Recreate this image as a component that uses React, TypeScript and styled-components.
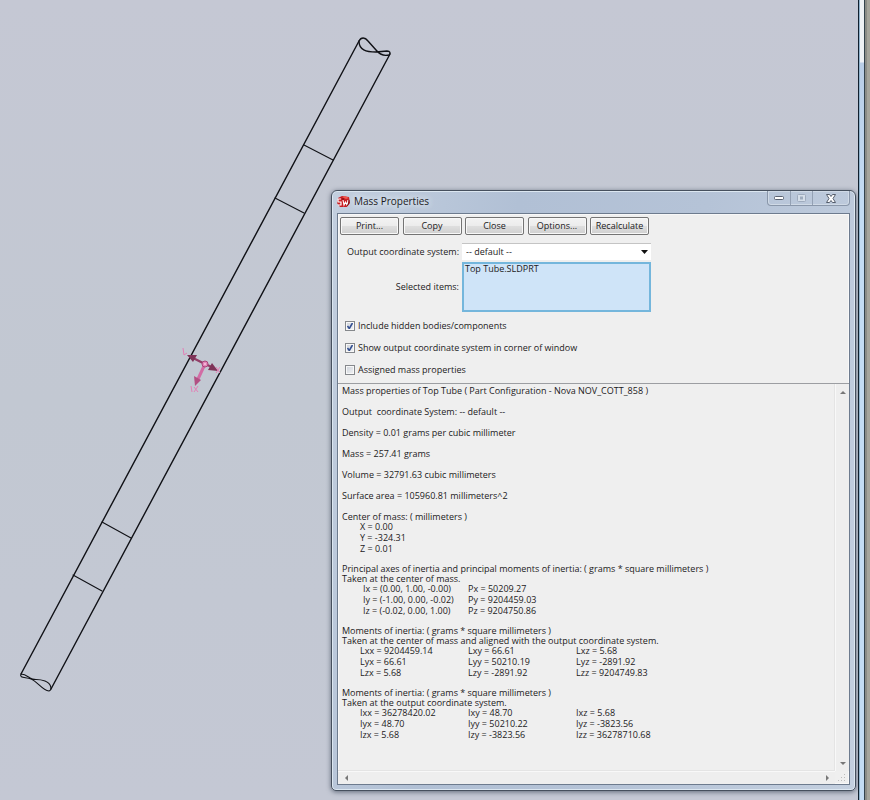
import React from 'react';
import styled, { createGlobalStyle } from 'styled-components';

const GlobalStyle = createGlobalStyle`
  * { box-sizing: border-box; }
  body { margin: 0; }
  body, button, select, textarea {
    font-family: "Open Sans", "Noto Sans", sans-serif;
    font-size: 9px;
    line-height: 10px;
    color: #1c1a22;
  }
`;

const Page = styled.div`
  display: flex;
  min-height: 100vh;
  background: #c4c8d3;
`;

const Viewport = styled.main`
  position: relative;
  flex: 1;
  overflow: hidden;
  background: linear-gradient(#c5c8d4, #c2c8d2 50%, #c4c8d4);
`;

const Drawing = styled.svg`
  position: absolute;
  left: 0;
  top: 0;
`;

const WindowEdge = styled.div`
  width: 12px;
  border-left: 1px solid #10202e;
  background:
    linear-gradient(90deg, #8fb2cc 0 1px, transparent 1px 5px, #34434d 5px 6px, #8b8c87 6px 8px, #a5a59d 8px),
    linear-gradient(#eef1f5 0 62px, #b9cde6 63px, #c3dcf4 200px);
`;

const Dialog = styled.section`
  position: absolute;
  top: 190px;
  right: 2px;
  bottom: 9px;
  width: 525px;
  display: flex;
  flex-direction: column;
  padding: 0 5px 5px;
  border: 1px solid #46505e;
  border-radius: 6px 6px 5px 5px;
  background: linear-gradient(100deg, #c3cfdf, #b1c0d5 30%, #b5c3d7 60%, #c3cfdf);
  box-shadow: inset 0 0 0 1px #dce7f1, 0 1px 5px #5f6878;
`;

const TitleBar = styled.header`
  display: flex;
  align-items: flex-start;
  height: 22px;
`;

const Title = styled.h1`
  flex: 1;
  display: flex;
  align-items: center;
  gap: 4px;
  height: 20px;
  margin: 0;
  font-size: 10px;
  font-weight: 400;
  line-height: 12px;
  text-shadow: 0 0 6px #e8f0f8, 0 0 6px #e8f0f8;
`;

const Caption = styled.div`
  display: flex;
  height: 15px;
  border: 1px solid #8a97aa;
  border-top: 0;
  border-radius: 0 0 4px 4px;
  box-shadow: inset 0 0 0 1px #d0dae6;
`;

const CaptionButton = styled.button<{ $wide?: boolean }>`
  display: grid;
  place-items: center;
  width: ${(p) => (p.$wide ? 37 : 22)}px;
  padding: 0;
  border: 0;
  background: none;
  & + & { border-left: 1px solid #94a1b4; }
`;

const Body = styled.div`
  flex: 1;
  display: flex;
  flex-direction: column;
  border: 1px solid #6d7b8e;
  background: #efefef;
  box-shadow: inset 0 0 0 1px #f8f8f8;
`;

const Toolbar = styled.div`
  display: flex;
  justify-content: space-between;
  width: 309px;
  margin: 3px 0 0 2px;
`;

const PushButton = styled.button`
  width: 59px;
  height: 18px;
  padding: 0;
  border: 1px solid #747474;
  border-radius: 2px;
  background: linear-gradient(#f3f3f3, #ececec 48%, #dedede 52%, #d0d0d0);
  box-shadow: inset 0 0 0 1px #f8f8f8;
  white-space: nowrap;
`;

const Form = styled.div`
  display: grid;
  grid-template-columns: 121px 189px;
  align-items: center;
  column-gap: 3px;
  row-gap: 2px;
  margin-top: 8px;
`;

const FieldLabel = styled.label`
  text-align: right;
  white-space: nowrap;
`;

const SelectBox = styled.div`
  display: flex;
  align-items: center;
  background: #fff;
  border-top: 1px solid #c4c4c4;
  svg { margin: 0 3px 0 -12px; pointer-events: none; }
`;

const Select = styled.select`
  appearance: none;
  flex: 1;
  height: 16px;
  padding: 0 4px;
  border: 0;
  background: transparent;
`;

const Items = styled.textarea`
  display: block;
  width: 100%;
  height: 50px;
  padding: 0 1px;
  border: 2px solid #74b6dc;
  outline: 0;
  resize: none;
  background: #cfe4f8;
`;

const Checks = styled.div`
  display: grid;
  gap: 11px;
  padding: 8px 7px;
`;

const CheckLabel = styled.label`
  display: flex;
  align-items: center;
  gap: 3px;
  height: 11px;
`;

const CheckBox = styled.input`
  appearance: none;
  width: 10px;
  height: 10px;
  margin: 0;
  border: 1px solid #85888c;
  box-shadow: inset 0 0 0 1px #f8f8f8;
  background: linear-gradient(135deg, #cdd2d9, #f2f3f5);
  &:checked {
    background: url("data:image/svg+xml,%3Csvg xmlns='http://www.w3.org/2000/svg' viewBox='0 0 8 8'%3E%3Cpath d='M1.5 4 3.3 6.5 6.5 1' fill='none' stroke='%23334f91' stroke-width='1.5'/%3E%3C/svg%3E"), linear-gradient(135deg, #cdd2d9, #f2f3f5);
  }
`;

const Output = styled.div`
  flex: 1;
  display: grid;
  grid-template-columns: 1fr 14px;
  grid-template-rows: 1fr 13px;
  border-top: 1px solid #9c9ea2;
`;

const Report = styled.article`
  padding: 2px 4px;
  white-space: pre;
`;

const Line = styled.p`
  margin: 0 0 11px;
`;

const Group = styled.section`
  margin-bottom: 9px;
`;

const GroupText = styled.p`
  margin: 0;
`;

const Values = styled.table<{ $indent: number }>`
  margin-left: ${(p) => p.$indent}px;
  border-collapse: collapse;
  table-layout: fixed;
  td { width: 108px; padding: 0 0 1px; }
  td:first-child { width: ${(p) => 126 - p.$indent}px; }
`;

const Bar = styled.div<{ $vertical?: boolean }>`
  display: flex;
  flex-direction: ${(p) => (p.$vertical ? 'column' : 'row')};
  justify-content: space-between;
  align-items: center;
  padding: ${(p) => (p.$vertical ? '4px 0' : '0 4px')};
  background: #eeeeee;
  border: 0 solid #f8f8f8;
  border-width: ${(p) => (p.$vertical ? '0 0 0 1px' : '1px 0 0')};
  box-shadow: ${(p) => (p.$vertical ? '-1px 0 #e4e4e4' : '0 -1px #e4e4e4')};
`;

const Arrow = styled.button`
  display: grid;
  place-items: center;
  width: 8px;
  height: 8px;
  padding: 0;
  border: 0;
  background: none;
`;

const Grip = styled.svg`
  place-self: center;
`;

const arrows = {
  up: 'M1 6 4 3 7 6Z',
  down: 'M1 3 4 6 7 3Z',
  left: 'M6 1 3 4 6 7Z',
  right: 'M3 1 6 4 3 7Z',
};

function ScrollArrow({ to }: { to: keyof typeof arrows }) {
  return (
    <Arrow type="button" aria-label={`Scroll ${to}`}>
      <svg width="8" height="8"><path d={arrows[to]} fill="#777" /></svg>
    </Arrow>
  );
}

function Tube() {
  return (
    <Drawing width="858" height="800" viewBox="0 0 858 800" fill="none" aria-label="Top tube">
      <g stroke="#101116" strokeWidth="1.4" strokeLinecap="round">
        <path d="M359 41 21 674M390 54 51 689" />
        <path d="M359 41C361 37 365 37 368 41L376 50C380 55 385 56 389 55 391 53 390 51 387 51L376 52C366 52 359 50 359 41" />
        <path d="M21 674C19 678 25 677 31 679 38 682 42 690 49 691 52 690 52 684 45 681 37 678 34 681 30 678 27 676 25 674 21 674" strokeWidth="1.1" />
        <path d="M304 145 333 160M275 198 304 213M102 522 131 538M73 575 102 591" strokeWidth="1.1" />
      </g>
      <g stroke="#b04f82" strokeWidth="2.4" strokeLinecap="round">
        <path d="M205 364 193 358M205 364 214 368" stroke="#923f68" />
        <path d="M205 364 198 379" stroke="#d26ca5" strokeWidth="3" />
      </g>
      <path d="M187 355 197 355 193 362ZM218 371 208 370 212 363Z" fill="#7e3358" />
      <path d="M195 386 194 376 201 380Z" fill="#b25083" />
      <circle cx="205" cy="364" r="3" fill="#e486b9" stroke="#a94579" />
      <circle cx="205" cy="364" r="1" fill="#f7c5df" />
      <path d="M183 348 184 355 187 353M216 367 220 373M220 367 216 373M191 386 192 392M194 387 198 392M198 386 194 392" stroke="#e47fb6" />
    </Drawing>
  );
}

function AppIcon() {
  return (
    <svg width="13" height="13" viewBox="0 0 13 13" fill="none">
      <path d="M1 3 5 1 12 2 13 8 10 12 3 12 0 8Z" fill="#c91d22" />
      <path d="M5 2 8 1 12 3 9 4Z" fill="#ef5a50" />
      <path d="M4 4H1V7H4V10H1" stroke="#fff" strokeWidth="1.2" />
      <path d="M6 5 7 10 8.500 7 10 10 11 5" stroke="#fff" strokeWidth="1.1" />
      <path d="M6 3V5M12 5V8L10 11" stroke="#6f0d12" />
    </svg>
  );
}

const summary = [
  'Mass properties of Top Tube ( Part Configuration - Nova NOV_COTT_858 )',
  'Output  coordinate System: -- default --',
  'Density = 0.01 grams per cubic millimeter',
  'Mass = 257.41 grams',
  'Volume = 32791.63 cubic millimeters',
  'Surface area = 105960.81 millimeters^2',
];

const groups = [
  {
    text: ['Center of mass: ( millimeters )'],
    indent: 18,
    rows: [['X = 0.00'], ['Y = -324.31'], ['Z = 0.01']],
  },
  {
    text: [
      'Principal axes of inertia and principal moments of inertia: ( grams * square millimeters )',
      'Taken at the center of mass.',
    ],
    indent: 21,
    rows: [
      ['Ix = (0.00, 1.00, -0.00)', 'Px = 50209.27'],
      ['Iy = (-1.00, 0.00, -0.02)', 'Py = 9204459.03'],
      ['Iz = (-0.02, 0.00, 1.00)', 'Pz = 9204750.86'],
    ],
  },
  {
    text: [
      'Moments of inertia: ( grams * square millimeters )',
      'Taken at the center of mass and aligned with the output coordinate system.',
    ],
    indent: 18,
    rows: [
      ['Lxx = 9204459.14', 'Lxy = 66.61', 'Lxz = 5.68'],
      ['Lyx = 66.61', 'Lyy = 50210.19', 'Lyz = -2891.92'],
      ['Lzx = 5.68', 'Lzy = -2891.92', 'Lzz = 9204749.83'],
    ],
  },
  {
    text: ['Moments of inertia: ( grams * square millimeters )', 'Taken at the output coordinate system.'],
    indent: 18,
    rows: [
      ['Ixx = 36278420.02', 'Ixy = 48.70', 'Ixz = 5.68'],
      ['Iyx = 48.70', 'Iyy = 50210.22', 'Iyz = -3823.56'],
      ['Izx = 5.68', 'Izy = -3823.56', 'Izz = 36278710.68'],
    ],
  },
];

const options = [
  { label: 'Include hidden bodies/components', checked: true },
  { label: 'Show output coordinate system in corner of window', checked: true },
  { label: 'Assigned mass properties', checked: false },
];

export default function App() {
  return (
    <Page>
      <GlobalStyle />
      <Viewport>
        <Tube />
        <Dialog role="dialog" aria-labelledby="dialog-title">
          <TitleBar>
            <Title id="dialog-title"><AppIcon />Mass Properties</Title>
            <Caption>
              <CaptionButton type="button" aria-label="Minimize">
                <svg width="10" height="5"><rect x=".5" y=".5" width="9" height="3" rx="1" fill="#fff" stroke="#596170" /></svg>
              </CaptionButton>
              <CaptionButton type="button" aria-label="Maximize" disabled>
                <svg width="9" height="8" fill="none" stroke="#9eabbd"><rect x=".5" y=".5" width="8" height="7" rx="1" fill="#d5dee9" /><rect x="3.500" y="3" width="2" height="2" /></svg>
              </CaptionButton>
              <CaptionButton type="button" aria-label="Close window" $wide>
                <svg width="10" height="9" viewBox="0 0 10 9"><path d="M.5.5H3.500L5 2.500 6.500.5H9.500L7 4.500 9.500 8.500H6.500L5 6.500 3.500 8.500H.5L3 4.500Z" fill="#fff" stroke="#555d6b" /></svg>
              </CaptionButton>
            </Caption>
          </TitleBar>
          <Body>
            <Toolbar>
              {['Print...', 'Copy', 'Close', 'Options...', 'Recalculate'].map((name) => (
                <PushButton type="button" key={name}>{name}</PushButton>
              ))}
            </Toolbar>
            <Form>
              <FieldLabel htmlFor="system">Output coordinate system:</FieldLabel>
              <SelectBox>
                <Select id="system"><option>-- default --</option></Select>
                <svg width="7" height="4"><path d="M0 0H7L3.500 4Z" fill="#111" /></svg>
              </SelectBox>
              <FieldLabel htmlFor="items">Selected items:</FieldLabel>
              <Items id="items" readOnly value="Top Tube.SLDPRT" />
            </Form>
            <Checks>
              {options.map((o) => (
                <CheckLabel key={o.label}>
                  <CheckBox type="checkbox" defaultChecked={o.checked} />
                  {o.label}
                </CheckLabel>
              ))}
            </Checks>
            <Output>
              <Report>
                {summary.map((line) => <Line key={line}>{line}</Line>)}
                {groups.map((group, i) => (
                  <Group key={i}>
                    {group.text.map((t) => <GroupText key={t}>{t}</GroupText>)}
                    <Values $indent={group.indent}>
                      <tbody>
                        {group.rows.map((row) => (
                          <tr key={row[0]}>{row.map((cell) => <td key={cell}>{cell}</td>)}</tr>
                        ))}
                      </tbody>
                    </Values>
                  </Group>
                ))}
              </Report>
              <Bar $vertical><ScrollArrow to="up" /><ScrollArrow to="down" /></Bar>
              <Bar><ScrollArrow to="left" /><ScrollArrow to="right" /></Bar>
              <Grip width="8" height="8" fill="#bcbcbc">
                <path d="M6 0h1v1H6zM3 3h1v1H3zM6 3h1v1H6zM0 6h1v1H0zM3 6h1v1H3zM6 6h1v1H6z" />
              </Grip>
            </Output>
          </Body>
        </Dialog>
      </Viewport>
      <WindowEdge />
    </Page>
  );
}
